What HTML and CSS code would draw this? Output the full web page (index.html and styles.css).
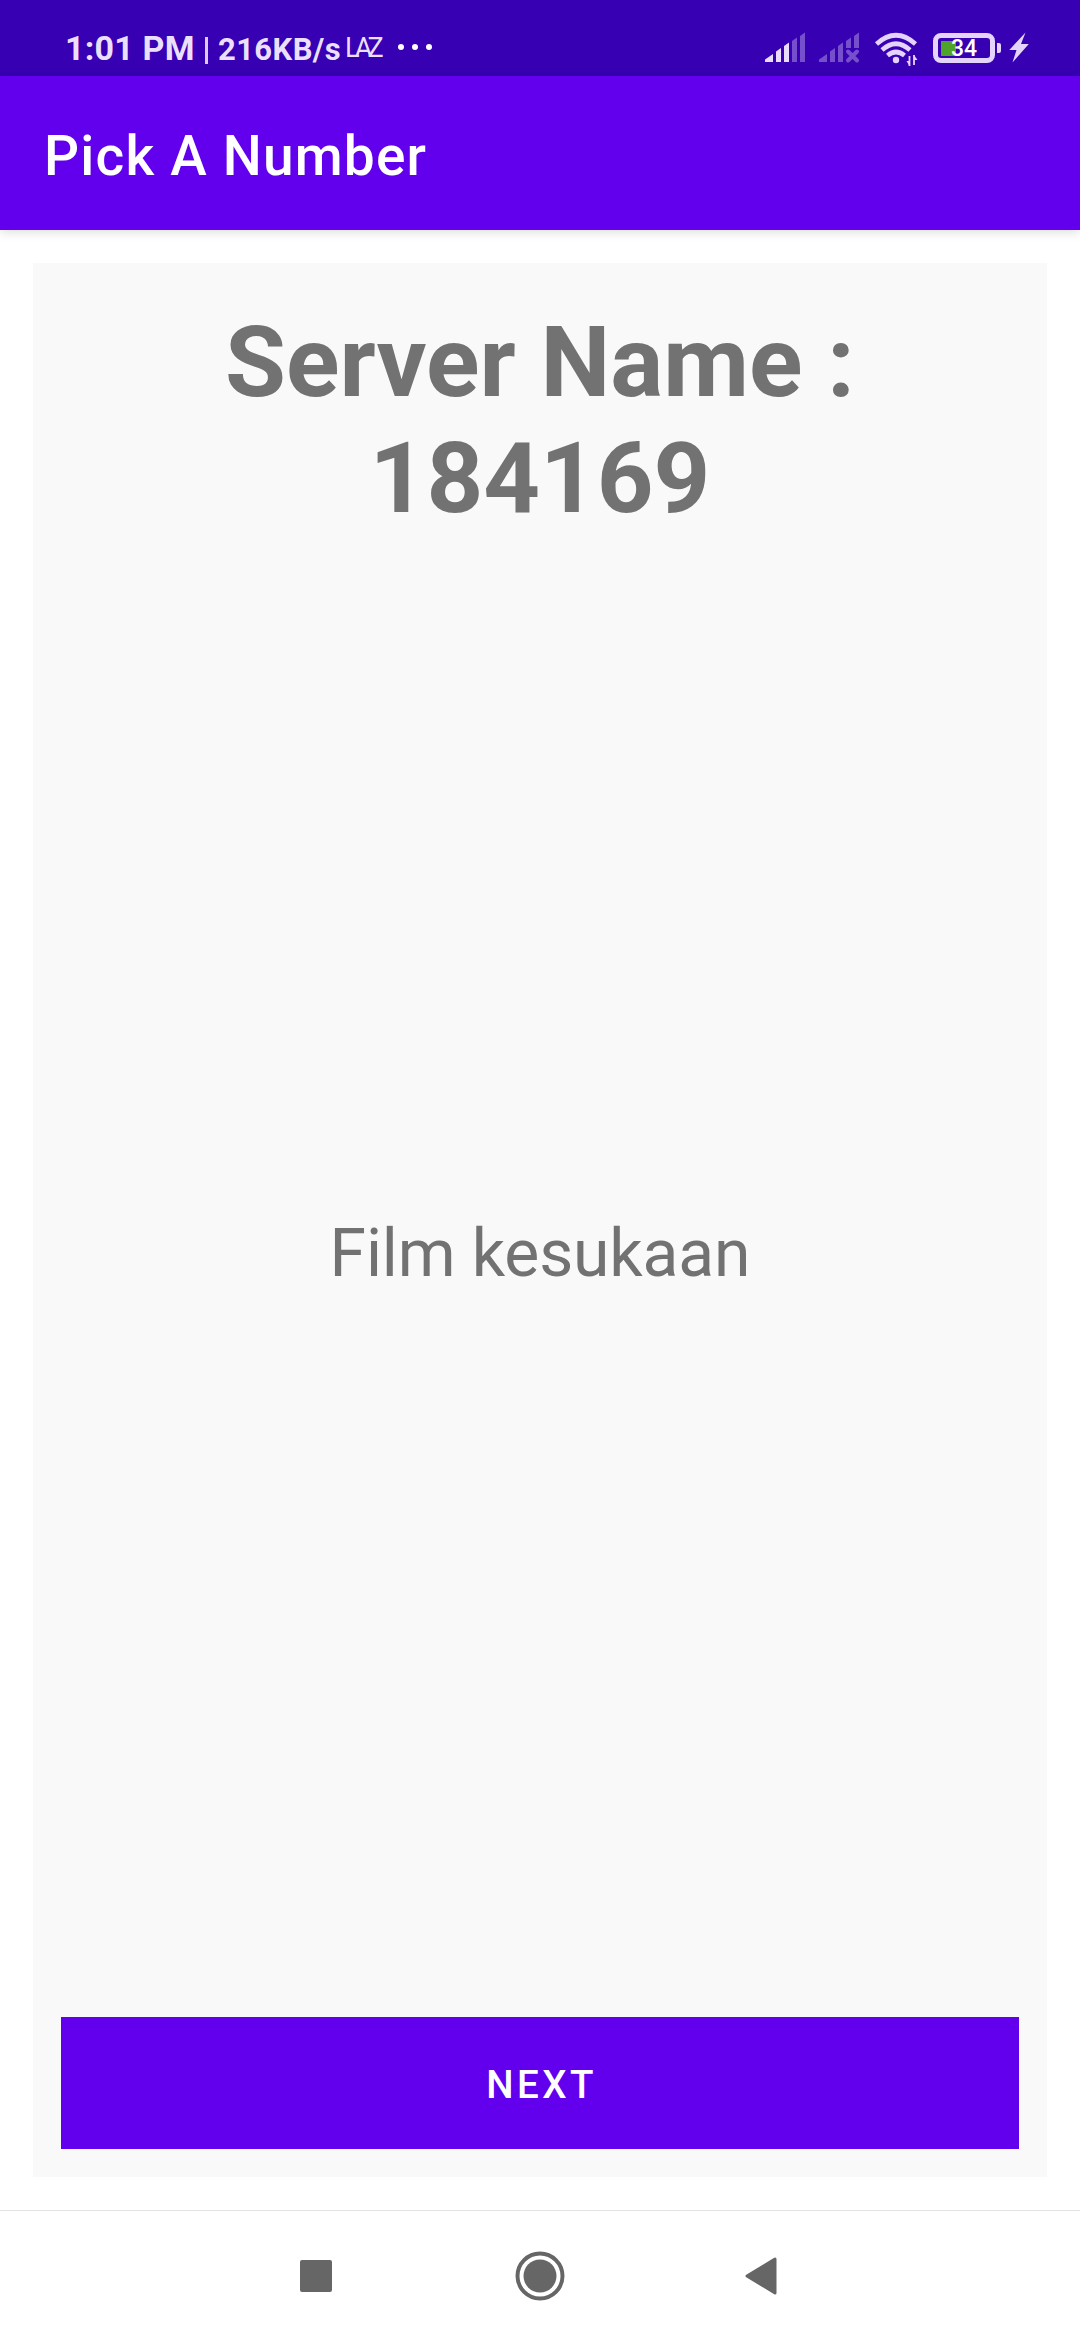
FILE: index.html
```html
<!DOCTYPE html>
<html lang="id">
<head>
<meta charset="utf-8">
<title>Pick A Number</title>
<link rel="stylesheet" href="styles.css">
</head>
<body>
<div class="screen">
  <div class="status-bar">
    <div class="status-left">
      <span class="clock">1:01 PM</span>
      <span class="divider"></span>
      <span class="speed">216KB/s</span>
      <span class="notification">LAZ</span>
      <span class="dots"><i></i><i></i><i></i></span>
    </div>
    <div class="status-right">
      <svg class="signal" width="41" height="32" viewBox="764 32 41 32">
        <path d="M765 62V59.500L773 54V62ZM776 62V51.500L781 48V62ZM784 62V46L789 42.500V62Z" fill="#e9dcfb"/>
        <path d="M792 62V41L797 37.500V62ZM800 62V36L805 32.500V62Z" fill="#7650cc"/>
      </svg>
      <svg class="signal-off" width="42" height="32" viewBox="818 32 42 32" fill="#7650cc">
        <path d="M819 62V59.500L827 54V62ZM830 62V51.500L835 48V62ZM838 62V46L843 42.500V62ZM846 48V41L851 37.500V48ZM854 48V36L859 32.500V48Z"/>
        <path d="M848 51.500L857 60.500M857 51.500L848 60.500" stroke="#7650cc" stroke-width="4" stroke-linecap="round"/>
      </svg>
      <svg class="wifi" width="44" height="34" viewBox="874 32 44 34" fill="none" stroke="#e4d3fa" stroke-width="4.600">
        <path d="M876.500 44Q896 26.500 915.500 44M882 50Q896 37.500 910 50M887.500 55.500Q896 48.500 904.500 55.500"/>
        <circle cx="896" cy="60" r="3.200" fill="#e4d3fa" stroke="none"/>
        <path d="M909.500 56V66M914 55V65" stroke-width="1.800"/>
        <path d="M906.500 61H909.500V66ZM917.500 60H914V55Z" fill="#e4d3fa" stroke="none"/>
      </svg>
      <span class="battery"><span class="charge"></span><span class="level">34</span></span>
      <span class="battery-tip"></span>
      <svg class="bolt" width="20" height="31" viewBox="1008.500 32.500 20 31"><path d="M1025 33L1008.800 50.500H1016L1012 63L1028.300 44.500H1020.500Z" fill="#e4d3fa"/></svg>
    </div>
  </div>
  <header class="app-bar"><h1 class="app-title">Pick A Number</h1></header>
  <main class="content">
    <section class="card">
      <h2 class="server">Server Name : 184169</h2>
      <p class="question">Film kesukaan</p>
      <button class="next" type="button">NEXT</button>
    </section>
  </main>
  <nav class="nav-bar">
    <svg width="32" height="32" viewBox="0 0 32 32"><rect width="32" height="32" rx="2" fill="#666"/></svg>
    <svg class="home" width="50" height="50" viewBox="0 0 50 50"><circle cx="25" cy="25" r="22.500" fill="none" stroke="#666" stroke-width="4"/><circle cx="25" cy="25" r="16.500" fill="#666"/></svg>
    <svg class="back" width="32" height="38" viewBox="0 0 32 38"><path d="M2 19L30 2V36Z" fill="#666" stroke="#666" stroke-width="3" stroke-linejoin="round"/></svg>
  </nav>
</div>
</body>
</html>
```

FILE: styles.css
```css
* { box-sizing: border-box; }
body { margin: 0; background: #fff; font-family: Roboto, sans-serif; }
.screen { display: flex; flex-direction: column; width: 1080px; height: 2340px; overflow: hidden; }

.status-bar { display: flex; justify-content: space-between; flex: none; height: 76px; background: #3700b3; color: #ebdffc; }
.status-left { display: flex; align-items: flex-start; padding: 28px 0 0 65px; white-space: nowrap; }
.clock { width: 129px; font-size: 34px; line-height: 40px; font-weight: 700; letter-spacing: .2px; }
.divider { width: 3px; height: 27px; margin: 9px 0 0 11px; background: #dccbf7; }
.speed { width: 122px; margin-left: 10px; font-size: 31px; line-height: 43px; font-weight: 700; letter-spacing: .4px; }
.notification { width: 36px; margin-left: 5px; font-size: 27px; line-height: 40px; letter-spacing: -5px; }
.dots { display: flex; gap: 8px; margin: 16px 0 0 17px; }
.dots i { width: 6px; height: 6px; border-radius: 50%; background: #fff; }

.status-right { display: flex; align-items: flex-start; padding: 32px 51px 0 0; }
.signal-off { margin-left: 13px; }
.wifi { margin-left: 14px; }
.battery { position: relative; display: flex; width: 62px; height: 30px; margin: 1px 0 0 15px; padding: 3px; border: 5px solid #e4d3fa; border-radius: 8px; }
.charge { width: 15px; height: 15px; background: #4fa32b; }
.level { position: absolute; left: 13px; top: -3px; font-size: 23px; line-height: 28px; font-weight: 500; color: #fff; }
.battery-tip { width: 4px; height: 10px; margin: 11px 0 0 2px; border-radius: 0 2px 2px 0; background: #e4d3fa; }
.bolt { margin-left: 8px; }

.app-bar { position: relative; display: flex; align-items: center; flex: none; height: 154px; padding: 5px 0 0 44px; background: #6200ee; box-shadow: 0 2px 10px rgba(0, 0, 0, .14); }
.app-title { margin: 0; font-size: 55px; line-height: 64px; font-weight: 500; letter-spacing: 1.2px; color: #fff; }

.content { display: flex; flex: none; height: 1980px; padding: 33px; }
.card { display: flex; flex-direction: column; flex: 1; padding: 41px 28px 28px; background: #f9f9f9; color: #727272; text-align: center; }
.server { width: 720px; margin: 0 auto; font-size: 99px; line-height: 116px; font-weight: 700; }
.question { display: flex; align-items: center; justify-content: center; flex: 1; margin: 0; padding-bottom: 46px; font-size: 66px; line-height: 78px; letter-spacing: -.15px; }
.next { height: 132px; padding: 3px 0 0 3px; border: 0; background: #6200ee; color: #fff; font: 500 38.5px/46px Roboto, sans-serif; letter-spacing: .0893em; }

.nav-bar { display: flex; align-items: center; flex: 1; padding-left: 300px; border-top: 1px solid #e2e2e2; }
.home { margin-left: 183px; }
.back { margin-left: 180px; }
```
